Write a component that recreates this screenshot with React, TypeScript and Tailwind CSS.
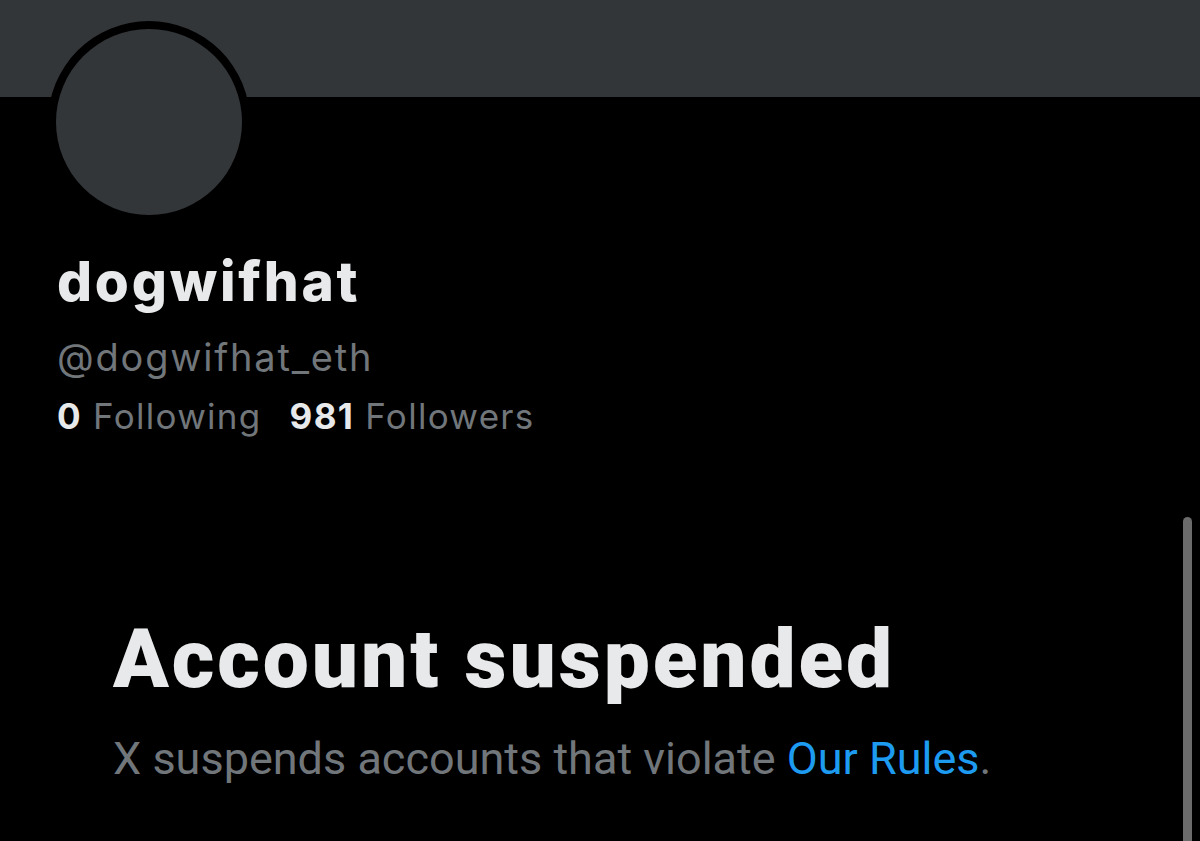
import React from "react";

export default function App() {
  return (
    <div className="relative w-[1200px] h-[841px] overflow-hidden bg-black" style={{ fontFamily: "Roboto, 'Liberation Sans', sans-serif" }}>
      <div className="h-[97px] bg-[#333639]" />
      <div className="ml-[48px] -mt-[76px] w-[202px] h-[202px] rounded-full bg-black p-[8px]">
        <div className="w-full h-full rounded-full bg-[#333639]" />
      </div>
      <div className="pl-[57px] mt-[26px]" style={{ fontFamily: "Inter, 'Liberation Sans', sans-serif" }}>
        <div className="text-[55px] leading-[64px] font-extrabold text-[#e7e9ea] tracking-[2.8px]">dogwifhat</div>
        <div className="mt-[16px] text-[38px] leading-[56px] text-[#71767b] tracking-[1.8px]">@dogwifhat_eth</div>
        <div className="mt-[3px] flex gap-[28px] text-[35px] leading-[56px] tracking-[1.3px]">
          <div><span className="font-bold text-[#e7e9ea]">0</span> <span className="text-[#71767b]">Following</span></div>
          <div><span className="font-bold text-[#e7e9ea]">981</span> <span className="text-[#71767b]">Followers</span></div>
        </div>
      </div>
      <div className="pl-[113px] mt-[167px]">
        <div className="text-[82px] leading-[96px] font-black text-[#e7e9ea] tracking-[2.9px]">Account suspended</div>
        <div className="mt-[24px] text-[45px] leading-[56px] text-[#71767b]">
          X suspends accounts that violate <span className="text-[#1d9bf0]">Our Rules</span>.
        </div>
      </div>
      <div className="absolute right-[8px] top-[517px] w-[9px] h-[340px] rounded-full bg-[#6b6b6b]" />
    </div>
  );
}
